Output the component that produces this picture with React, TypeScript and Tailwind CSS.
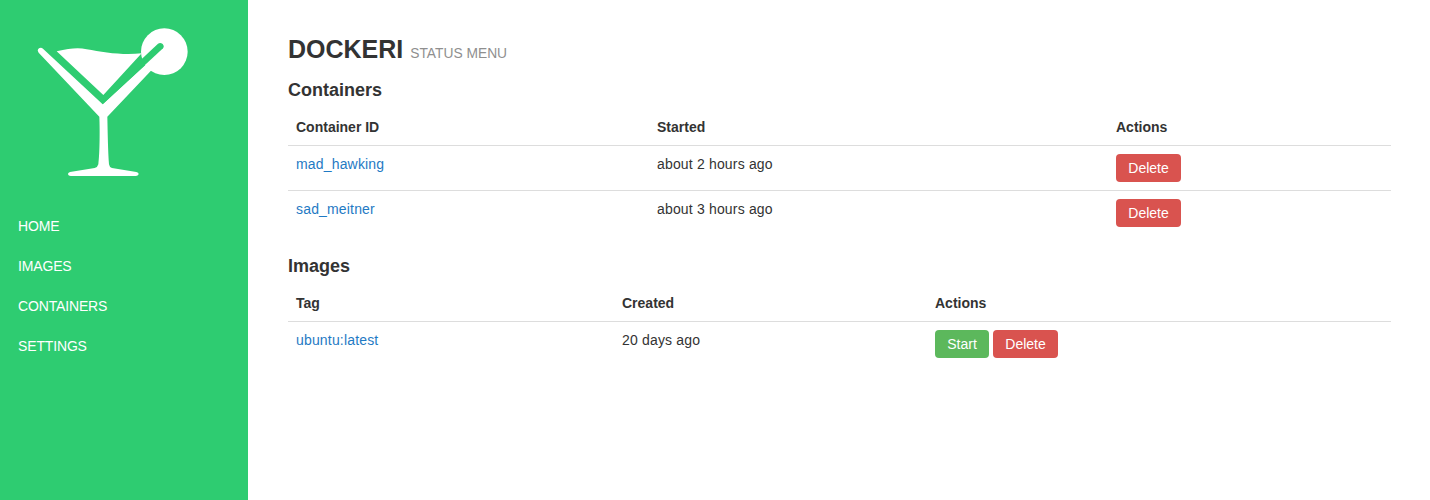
import type { FC, ReactElement } from 'react';
import React from 'react';

const navItems = ['HOME', 'IMAGES', 'CONTAINERS', 'SETTINGS'];

const Logo: FC = (): ReactElement => (
  <svg viewBox="0 0 570 525" className="w-[190px] h-[175px] block ml-5 mt-[15px]">
    <circle cx="433" cy="110" r="70" fill="#fff" />
    {/* glass outline and stem */}
    <path
      d="M56,113 Q50,105 57,100 Q63,96 69,101 L248,268 L400,128 L400,160 L262,305 C263,350 264,410 267,448 Q268,457 276,459 L349,471 Q356,473 356,477 Q356,482 348,483 L152,483 Q145,483 144,478 Q143,473 150,471 L224,459 Q233,457 235,448 C239,420 240,350 238,305 Z"
      fill="#fff"
    />
    {/* gap between glass and drink, runs through the lime */}
    <path d="M250,240 L414,86 Q421,81 428,87 Q434,94 429,100 L248,268 Z" fill="#2ecc71" />
    <path d="M110,109 C150,100 175,97 200,103 C250,112 310,122 365,115 L250,240 Z" fill="#fff" />
  </svg>
);

const Sidebar: FC = (): ReactElement => (
  <aside className="w-[248px] shrink-0 bg-[#2ecc71]">
    <Logo />
    <nav className="mt-[16px] flex flex-col">
      {navItems.map((item) => (
        <a key={item} href="#" className="h-10 pl-[18px] flex items-center text-sm tracking-[-0.15px] text-white">
          {item}
        </a>
      ))}
    </nav>
  </aside>
);

const Btn: FC<{ label: string; color: 'red' | 'green' }> = ({ label, color }): ReactElement => (
  <button
    type="button"
    className={
      color === 'red'
        ? 'h-7 w-[65px] rounded bg-[#d9534f] text-sm text-white'
        : 'h-7 w-[54px] rounded bg-[#5cb85c] text-sm text-white'
    }
  >
    {label}
  </button>
);

const Th: FC<{ label: string; width?: string }> = ({ label, width }): ReactElement => (
  <th className={`${width ?? ''} p-2 text-left text-sm leading-5 font-bold border-b border-[#ddd]`}>{label}</th>
);

const Main: FC = (): ReactElement => (
  <main className="w-[1103px] ml-10 pt-[35px] text-sm text-[#333]">
    <h1 className="text-[25px] leading-7 font-bold">
      DOCKERI <small className="text-[13.8px] leading-5 font-normal text-[#8f8f8f]">STATUS MENU</small>
    </h1>

    <h2 className="mt-4 text-lg leading-5 font-bold">Containers</h2>
    <table className="mt-[9px] w-full table-fixed">
      <thead>
        <tr>
          <Th label="Container ID" width="w-[361px]" />
          <Th label="Started" width="w-[459px]" />
          <Th label="Actions" />
        </tr>
      </thead>
      <tbody>
        <tr className="border-b border-[#ddd]">
          <td className="p-2 align-top leading-5 tracking-[0.17px]">
            <a href="#" className="text-[#1f7ac4]">mad_hawking</a>
          </td>
          <td className="p-2 align-top leading-5 tracking-[0.17px]">about 2 hours ago</td>
          <td className="p-2 align-top leading-5">
            <Btn label="Delete" color="red" />
          </td>
        </tr>
        <tr>
          <td className="p-2 align-top leading-5 tracking-[0.17px]">
            <a href="#" className="text-[#1f7ac4]">sad_meitner</a>
          </td>
          <td className="p-2 align-top leading-5 tracking-[0.17px]">about 3 hours ago</td>
          <td className="p-2 align-top leading-5">
            <Btn label="Delete" color="red" />
          </td>
        </tr>
      </tbody>
    </table>

    <h2 className="mt-[21px] text-lg leading-5 font-bold">Images</h2>
    <table className="mt-[9px] w-full table-fixed">
      <thead>
        <tr>
          <Th label="Tag" width="w-[326px]" />
          <Th label="Created" width="w-[313px]" />
          <Th label="Actions" />
        </tr>
      </thead>
      <tbody>
        <tr>
          <td className="p-2 align-top leading-5 tracking-[0.17px]">
            <a href="#" className="text-[#1f7ac4]">ubuntu:latest</a>
          </td>
          <td className="p-2 align-top leading-5 tracking-[0.17px]">20 days ago</td>
          <td className="p-2 align-top leading-5">
            <div className="flex gap-1">
              <Btn label="Start" color="green" />
              <Btn label="Delete" color="red" />
            </div>
          </td>
        </tr>
      </tbody>
    </table>
  </main>
);

const App: FC = (): ReactElement => {
  return (
    <div className="flex min-h-screen bg-white font-['Liberation_Sans',Arial,sans-serif]">
      <Sidebar />
      <Main />
    </div>
  );
};
export default App;
